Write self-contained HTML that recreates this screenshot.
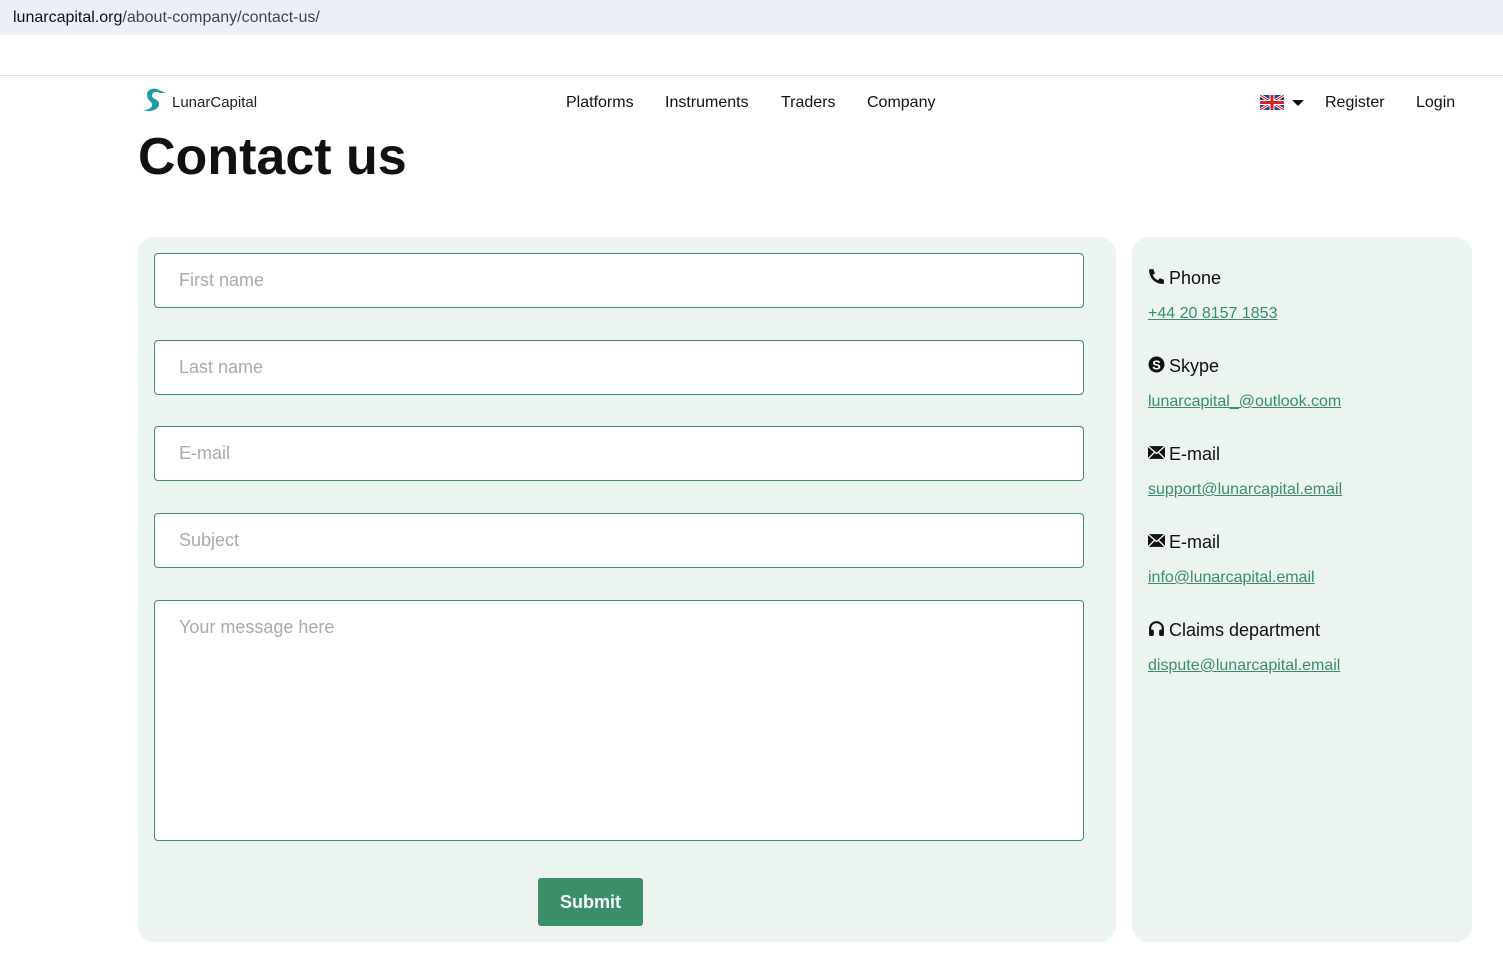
<!DOCTYPE html>
<html><head><meta charset="utf-8"><style>
*{box-sizing:border-box;margin:0;padding:0}
body{width:1503px;height:974px;background:#fff;font-family:"Liberation Sans",Arial,sans-serif;color:#111;position:relative;overflow:hidden}
.bar{position:absolute;left:0;top:0;width:1503px;height:35px;background:#ebf0f8}
.bar span{position:absolute;left:13px;top:9px;font-size:16px;color:#111}
.hr{position:absolute;left:0;top:75px;width:1503px;height:1px;background:#e2e2e2}
.nav{position:absolute;top:94px;font-size:16px;color:#111}
h1{position:absolute;left:138px;top:127px;font-size:52px;font-weight:bold;color:#111}
.panel{position:absolute;background:#ebf4ef;border-radius:16px}
.in{position:absolute;left:154px;width:930px;height:55px;background:#fff;border:1px solid #3a8f6a;border-radius:4px;color:#aaa;font-size:18px;padding:16px 24px}
.btn{position:absolute;left:538px;top:878px;width:105px;height:48px;background:#3a8f6a;border-radius:3px;color:#fff;font-size:18px;font-weight:bold;text-align:center;line-height:48px}
.lab{position:absolute;left:1148px;font-size:18px;color:#111;display:flex;align-items:center;gap:4px}
.lnk{position:absolute;left:1148px;font-size:16px;color:#3a8f6a;text-decoration:underline}
</style></head><body>
<div class="bar"><span>lunarcapital.org<span style="position:static;color:#444">/about-company/contact-us/</span></span></div>
<div class="hr"></div>
<svg style="position:absolute;left:141px;top:86px" width="27" height="27" viewBox="0 0 27 27"><path d="M6 9C6 3 13 1 18 4L25 7 19 7C15 5 11 6 11 10 11 13 17 13 18 17 19 23 10 27 2 24 8 24 12 21 11 18 10 15 6 14 6 9Z" fill="#1f9aa6"/></svg>
<div class="nav" style="left:172px;top:94px;font-size:15px;color:#222">LunarCapital</div>
<div class="nav" style="left:566px">Platforms</div>
<div class="nav" style="left:665px">Instruments</div>
<div class="nav" style="left:781px">Traders</div>
<div class="nav" style="left:867px">Company</div>
<svg style="position:absolute;left:1260px;top:95px" width="24" height="15" viewBox="0 0 24 15"><rect width="24" height="15" fill="#2a3f8f"/><path d="M0 0L24 15M24 0L0 15" stroke="#fff" stroke-width="3"/><path d="M0 0L24 15M24 0L0 15" stroke="#d22" stroke-width="1"/><path d="M12 0V15M0 7.5H24" stroke="#fff" stroke-width="5"/><path d="M12 0V15M0 7.5H24" stroke="#d22" stroke-width="3"/></svg>
<div style="position:absolute;left:1292px;top:100px;border-left:6px solid transparent;border-right:6px solid transparent;border-top:6px solid #111"></div>
<div class="nav" style="left:1325px">Register</div>
<div class="nav" style="left:1416px">Login</div>
<h1>Contact us</h1>
<div class="panel" style="left:138px;top:237px;width:978px;height:705px"></div>
<div class="panel" style="left:1132px;top:237px;width:340px;height:705px"></div>
<div class="in" style="top:253px">First name</div>
<div class="in" style="top:340px">Last name</div>
<div class="in" style="top:426px">E-mail</div>
<div class="in" style="top:513px">Subject</div>
<div class="in" style="top:600px;height:241px">Your message here</div>
<div class="btn">Submit</div>
<div class="lab" style="top:268px"><svg width="17" height="17" viewBox="0 0 16 16" style="margin-top:-4px"><path d="M2 1L5 1 6.5 5 4.5 6.5C5.5 9 7 10.5 9.5 11.5L11 9.5 15 11 15 14C15 15 14 15 13 15 6 14 2 10 1 3 1 2 1 1 2 1Z" fill="#111"/></svg>Phone</div>
<div class="lnk" style="top:305px">+44 20 8157 1853</div>
<div class="lab" style="top:356px"><svg width="17" height="17" viewBox="0 0 16 16" style="margin-top:-4px"><circle cx="8" cy="8" r="7.5" fill="#111"/><text x="8" y="12.5" font-size="12" font-weight="bold" fill="#fff" text-anchor="middle" font-family="Liberation Sans">S</text></svg>Skype</div>
<div class="lnk" style="top:393px">lunarcapital_@outlook.com</div>
<div class="lab" style="top:444px"><svg width="17" height="15" viewBox="0 0 16 14" style="margin-top:-5px"><rect y="1" width="16" height="12" fill="#111"/><path d="M0 1L8 8 16 1M0 13L6 7M16 13L10 7" stroke="#fff" stroke-width="1.2" fill="none"/></svg>E-mail</div>
<div class="lnk" style="top:481px">support@lunarcapital.email</div>
<div class="lab" style="top:532px"><svg width="17" height="15" viewBox="0 0 16 14" style="margin-top:-5px"><rect y="1" width="16" height="12" fill="#111"/><path d="M0 1L8 8 16 1M0 13L6 7M16 13L10 7" stroke="#fff" stroke-width="1.2" fill="none"/></svg>E-mail</div>
<div class="lnk" style="top:569px">info@lunarcapital.email</div>
<div class="lab" style="top:620px"><svg width="17" height="17" viewBox="0 0 16 16" style="margin-top:-4px"><path d="M2 10V8A6 6 0 0 1 14 8V10" stroke="#111" stroke-width="2" fill="none"/><rect x="1" y="9" width="4.5" height="6" rx="1.5" fill="#111"/><rect x="10.5" y="9" width="4.5" height="6" rx="1.5" fill="#111"/></svg>Claims department</div>
<div class="lnk" style="top:657px">dispute@lunarcapital.email</div>
</body></html>
